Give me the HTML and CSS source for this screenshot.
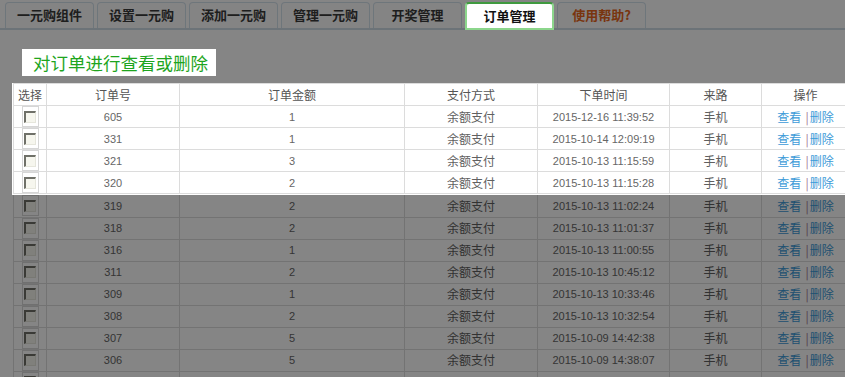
FILE: index.html
```html
<!DOCTYPE html>
<html lang="zh-CN">
<head>
  <meta charset="UTF-8" />
  <title>订单管理</title>
  <link rel="stylesheet" href="styles.css">
</head>
<body>

  <div class="tabs">
    <a class="tab" href="#">一元购组件</a>
    <a class="tab" href="#">设置一元购</a>
    <a class="tab" href="#">添加一元购</a>
    <a class="tab" href="#">管理一元购</a>
    <a class="tab" href="#">开奖管理</a>
    <a class="tab tab-on" href="#">订单管理</a>
    <a class="tab tab-help" href="#">使用帮助?</a>
  </div>

  <div class="title"><span>对订单进行查看或删除</span></div>

  <!-- highlighted part of the list -->
  <div class="lit">
    <table class="orders">
      <colgroup>
        <col class="c-sel"><col class="c-no"><col class="c-amt"><col class="c-pay"><col class="c-time"><col class="c-from"><col class="c-op">
      </colgroup>
      <thead>
        <tr><th>选择</th><th>订单号</th><th>订单金额</th><th>支付方式</th><th>下单时间</th><th>来路</th><th>操作</th></tr>
      </thead>
      <tbody>
        <tr><td><span class="chk"><i></i></span></td><td class="n">605</td><td class="n">1</td><td>余额支付</td><td class="n">2015-12-16 11:39:52</td><td>手机</td><td><a href="#">查看</a><span class="sep">|</span><a href="#">删除</a></td></tr>
        <tr><td><span class="chk"><i></i></span></td><td class="n">331</td><td class="n">1</td><td>余额支付</td><td class="n">2015-10-14 12:09:19</td><td>手机</td><td><a href="#">查看</a><span class="sep">|</span><a href="#">删除</a></td></tr>
        <tr><td><span class="chk"><i></i></span></td><td class="n">321</td><td class="n">3</td><td>余额支付</td><td class="n">2015-10-13 11:15:59</td><td>手机</td><td><a href="#">查看</a><span class="sep">|</span><a href="#">删除</a></td></tr>
        <tr><td><span class="chk"><i></i></span></td><td class="n">320</td><td class="n">2</td><td>余额支付</td><td class="n">2015-10-13 11:15:28</td><td>手机</td><td><a href="#">查看</a><span class="sep">|</span><a href="#">删除</a></td></tr>
      </tbody>
    </table>
  </div>

  <table class="orders rest">
    <colgroup>
      <col class="c-sel"><col class="c-no"><col class="c-amt"><col class="c-pay"><col class="c-time"><col class="c-from"><col class="c-op">
    </colgroup>
    <tbody>
      <tr><td><span class="chk"><i></i></span></td><td class="n">319</td><td class="n">2</td><td>余额支付</td><td class="n">2015-10-13 11:02:24</td><td>手机</td><td><a href="#">查看</a><span class="sep">|</span><a href="#">删除</a></td></tr>
      <tr><td><span class="chk"><i></i></span></td><td class="n">318</td><td class="n">2</td><td>余额支付</td><td class="n">2015-10-13 11:01:37</td><td>手机</td><td><a href="#">查看</a><span class="sep">|</span><a href="#">删除</a></td></tr>
      <tr><td><span class="chk"><i></i></span></td><td class="n">316</td><td class="n">1</td><td>余额支付</td><td class="n">2015-10-13 11:00:55</td><td>手机</td><td><a href="#">查看</a><span class="sep">|</span><a href="#">删除</a></td></tr>
      <tr><td><span class="chk"><i></i></span></td><td class="n">311</td><td class="n">2</td><td>余额支付</td><td class="n">2015-10-13 10:45:12</td><td>手机</td><td><a href="#">查看</a><span class="sep">|</span><a href="#">删除</a></td></tr>
      <tr><td><span class="chk"><i></i></span></td><td class="n">309</td><td class="n">1</td><td>余额支付</td><td class="n">2015-10-13 10:33:46</td><td>手机</td><td><a href="#">查看</a><span class="sep">|</span><a href="#">删除</a></td></tr>
      <tr><td><span class="chk"><i></i></span></td><td class="n">308</td><td class="n">2</td><td>余额支付</td><td class="n">2015-10-13 10:32:54</td><td>手机</td><td><a href="#">查看</a><span class="sep">|</span><a href="#">删除</a></td></tr>
      <tr><td><span class="chk"><i></i></span></td><td class="n">307</td><td class="n">5</td><td>余额支付</td><td class="n">2015-10-09 14:42:38</td><td>手机</td><td><a href="#">查看</a><span class="sep">|</span><a href="#">删除</a></td></tr>
      <tr><td><span class="chk"><i></i></span></td><td class="n">306</td><td class="n">5</td><td>余额支付</td><td class="n">2015-10-09 14:38:07</td><td>手机</td><td><a href="#">查看</a><span class="sep">|</span><a href="#">删除</a></td></tr>
      <tr><td><span class="chk"><i></i></span></td><td class="n"></td><td class="n"></td><td></td><td class="n"></td><td></td><td></td></tr>
    </tbody>
  </table>

  <div class="mask"></div>

</body>
</html>
```

FILE: styles.css
```css
html, body {
  overflow: hidden;
}

body {
  margin: 0;
  background: #ffffff;
  font-family: 'Liberation Sans', 'Noto Sans CJK SC', sans-serif;
  font-size: 12px;
  color: #666666;
}

/* tab strip */
.tabs {
  display: flex;
  align-items: flex-start;
  gap: 3px;
  height: 26px;
  padding: 2px 0 0 5px;
  border-bottom: 2px solid #d0dde6;
}

.tab {
  width: 89px;
  height: 26px;
  box-sizing: border-box;
  border: 1px solid #d4e2ec;
  border-bottom: none;
  border-radius: 4px 4px 0 0;
  background: #fdfdfd;
  font: bold 13px 'Noto Sans CJK SC', sans-serif;
  line-height: 24px;
  color: #3a3a3a;
  text-align: center;
  text-decoration: none;
}

.tab-on {
  position: relative;
  z-index: 11;
  height: 28px;
  background: #ffffff;
  border: 2px solid #8cd68c;
  border-top-color: #3f9a3f;
  color: #111111;
}

.tab-help {
  color: #e8661c;
}

/* heading */
.title {
  display: flex;
  margin: 19px 0 0 22px;
}

.title span {
  position: relative;
  z-index: 11;
  background: #ffffff;
  padding: 0 8px 0 11px;
  font-family: 'Noto Sans CJK SC', sans-serif;
  font-size: 17.5px;
  line-height: 27px;
  color: #1ea51e;
}

/* order list */
.lit {
  position: relative;
  z-index: 11;
  background: #ffffff;
  margin: 7px 0 0 12px;
  padding: 0 0 1px 1px;
}

.orders {
  width: 836px;
  table-layout: fixed;
  border-collapse: collapse;
}

.rest {
  margin-left: 13px;
}

.rest tr:first-child td {
  border-top: none;
}

.c-sel { width: 33px; }
.c-no { width: 133px; }
.c-amt { width: 225px; }
.c-pay { width: 133px; }
.c-time { width: 132px; }
.c-from { width: 92px; }
.c-op { width: 88px; }

.orders tr {
  height: 22px;
}

.orders th,
.orders td {
  height: 20px;
  padding: 0;
  border: 1px solid #dcdcdc;
  text-align: center;
  white-space: nowrap;
  font-weight: normal;
  font-family: 'Noto Sans CJK SC', sans-serif;
  font-size: 12px;
  line-height: 16px;
  color: #606060;
}

.orders th {
  color: #555555;
}

.orders td.n {
  font-family: 'Liberation Sans', sans-serif;
  font-size: 11px;
  color: #666666;
}

.chk {
  display: inline-flex;
  align-items: center;
  justify-content: center;
  width: 15px;
  height: 19px;
  border: 1px solid #d6d6d6;
  vertical-align: middle;
}

.chk i {
  width: 9px;
  height: 9px;
  border-top: 2px solid #6f7068;
  border-left: 2px solid #6f7068;
  border-right: 1px solid #e6e6dc;
  border-bottom: 1px solid #e6e6dc;
  background: #f6f6ee;
}

.orders a {
  color: #3d9bd8;
  text-decoration: none;
}

.sep {
  margin: 0 1px 0 4px;
  color: #a07a90;
}

/* tour mask */
.mask {
  position: fixed;
  inset: 0;
  z-index: 10;
  background: rgba(0, 0, 0, 0.48);
}
```
